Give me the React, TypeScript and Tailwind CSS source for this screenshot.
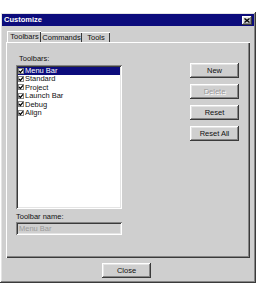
import React from "react";

const face = "bg-[#cfcfcf]";
const raised =
  "shadow-[inset_-1px_-1px_#3a3a3a,inset_1px_1px_#ffffff,inset_-2px_-2px_#858585,inset_2px_2px_#e4e4e4]";
const sunken =
  "shadow-[inset_1px_1px_#858585,inset_-1px_-1px_#ffffff,inset_2px_2px_#3a3a3a,inset_-2px_-2px_#e4e4e4]";

const toolbars = ["Menu Bar", "Standard", "Project", "Launch Bar", "Debug", "Align"];

function Check() {
  return (
    <span className="flex h-[6px] w-[6px] shrink-0 items-center justify-center bg-white shadow-[inset_0_0_0_1px_#858585]">
      <svg width="6" height="6" viewBox="0 0 6 6">
        <path d="M1 3 L2.4 4.5 L5 1.3" stroke="#000" strokeWidth="1.2" fill="none" />
      </svg>
    </span>
  );
}

function Btn({ label, disabled }: { label: string; disabled?: boolean }) {
  return (
    <div
      className={`flex h-[15px] w-[49px] items-center justify-center ${face} ${raised} ${
        disabled ? "text-[#9a9a9a] [text-shadow:1px_1px_#fff]" : "text-[#111]"
      }`}
    >
      {label}
    </div>
  );
}

export default function App() {
  return (
    <div className="h-[284px] w-[274px] bg-white pt-[12px] font-['Liberation_Sans',Arial,sans-serif] text-[7.5px] leading-none text-[#111]">
      <div className={`flex h-[271px] w-[256px] flex-col p-[2px] ${face} ${raised}`}>
        {/* title bar */}
        <div className="flex h-[12px] items-center justify-between bg-[#0c0c7c] pl-[2px] pr-[2px]">
          <span className="text-[7.5px] font-bold text-white">Customize</span>
          <div className={`flex h-[9px] w-[10px] items-center justify-center ${face} ${raised}`}>
            <svg width="6" height="5" viewBox="0 0 6 5">
              <path d="M0.5 0.5 L5.5 4.5 M5.5 0.5 L0.5 4.5" stroke="#000" strokeWidth="1.3" />
            </svg>
          </div>
        </div>

        {/* tabs */}
        <div className="mt-[5px] flex h-[11px] items-end pl-[5px]">
          <div className="relative z-10 flex h-[11px] w-[34px] items-center justify-center border-l border-t border-white pb-[1px] shadow-[inset_-1px_0_#3a3a3a]">
            Toolbars
          </div>
          <div className="flex h-[10px] w-[41px] items-center justify-center border-t border-white shadow-[inset_-1px_0_#3a3a3a]">
            Commands
          </div>
          <div className="flex h-[10px] w-[28px] items-center justify-center border-t border-white shadow-[inset_-1px_0_#3a3a3a]">
            Tools
          </div>
        </div>

        {/* panel */}
        <div className="ml-[4px] flex h-[216px] w-[244px] justify-between border-l border-t border-white pl-[9px] pr-[11px] pt-[12px] shadow-[inset_-1px_-1px_#3a3a3a,inset_-2px_-2px_#858585]">
          <div className="flex flex-col">
            <span className="ml-[3px]">Toolbars:</span>
            <div className={`mt-[2px] flex h-[144px] w-[106px] flex-col bg-white p-[2px] ${sunken}`}>
              {toolbars.map((t, i) => (
                <div
                  key={t}
                  className={`flex h-[8.4px] items-center gap-[1px] ${
                    i === 0 ? "bg-[#0c0c7c] text-white" : ""
                  }`}
                >
                  <Check />
                  <span>{t}</span>
                </div>
              ))}
            </div>
            <span className="mt-[4px]">Toolbar name:</span>
            <div className={`mt-[2px] flex h-[13px] w-[106px] items-center pl-[3px] text-[#9a9a9a] ${sunken}`}>
              Menu Bar
            </div>
          </div>
          <div className="mt-[8px] flex flex-col gap-[6px]">
            <Btn label="New" />
            <Btn label="Delete" disabled />
            <Btn label="Reset" />
            <Btn label="Reset All" />
          </div>
        </div>

        {/* footer */}
        <div className="flex justify-center pt-[5px] pr-[3px]">
          <Btn label="Close" />
        </div>
      </div>
    </div>
  );
}
